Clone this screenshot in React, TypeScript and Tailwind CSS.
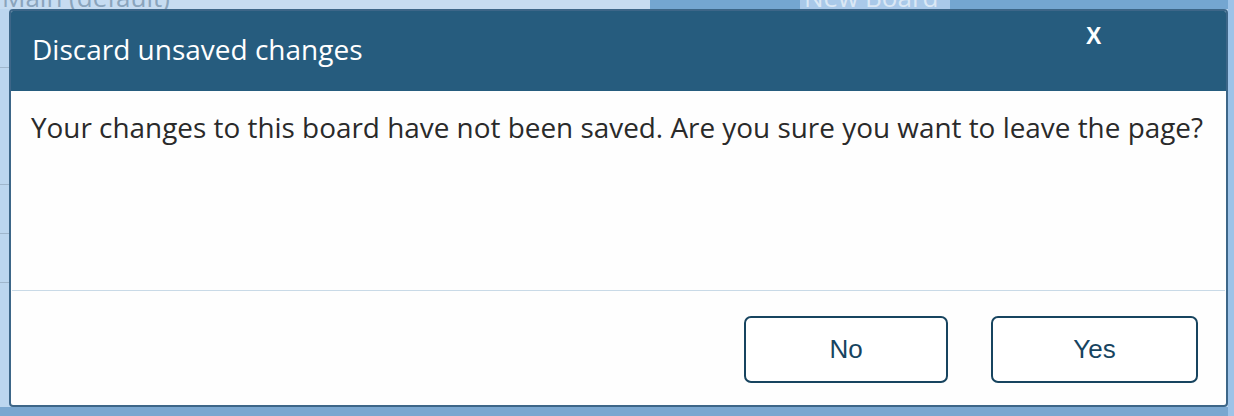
import React from 'react';

const openSans = { fontFamily: '"Open Sans", "Noto Sans", sans-serif' };

export default function App() {
  return (
    <div className="relative w-[1234px] h-[416px] overflow-hidden bg-[#bcd6ef]">
      {/* page behind the dialog */}
      <div className="flex h-[9px] items-end">
        <div className="w-[650px] h-full bg-[#c6dcf1] overflow-hidden">
          <div className="-mt-[16px] pl-[2px] text-[26px] leading-[26px] text-[#8aa4bc]" style={openSans}>
            Main (default)
          </div>
        </div>
        <div className="w-[150px] h-full bg-[#74a6d1]" />
        <div className="w-[150px] h-full bg-[#a9c9e9] overflow-hidden">
          <div className="-mt-[16px] pl-[4px] text-[26px] leading-[26px] text-[#dbe8f5]" style={openSans}>
            New Board
          </div>
        </div>
        <div className="flex-1 h-full bg-[#74a6d1]" />
      </div>
      <div className="flex flex-col w-[9px] h-[300px]">
        <div className="mt-[58px] h-px bg-[#9fb6cc]" />
        <div className="mt-[116px] h-px bg-[#9fb6cc]" />
        <div className="mt-[48px] h-px bg-[#9fb6cc]" />
        <div className="mt-[48px] h-px bg-[#9fb6cc]" />
      </div>
      <div className="absolute left-0 right-0 bottom-0 h-[9px] bg-[#7aa7d0]" />
      <div className="absolute top-0 bottom-0 right-0 w-[6px] bg-[#9dc3e8]" />

      {/* dialog */}
      <div className="absolute left-[9px] top-[9px] w-[1219px] h-[398px] flex flex-col rounded-[4px] border-[2px] border-[#3d6688] bg-[#fefefe] overflow-hidden">
        <div className="flex h-[81px] shrink-0 bg-[#265c7e] -m-px">
          <div className="flex-1 pl-[22px] pt-[20px] text-[28px] leading-[38px] text-white" style={openSans}>
            Discard unsaved changes
          </div>
          <div className="w-[148px] pt-[9px] pl-[7px] text-[23px] font-bold text-white font-['Liberation_Sans',Arial,sans-serif]">
            X
          </div>
        </div>
        <div className="h-[200px] shrink-0 pl-[20px] pt-[18px] text-[27.9px] leading-[38px] text-[#2a2a2a]" style={openSans}>
          Your changes to this board have not been saved. Are you sure you want to leave the page?
        </div>
        <div className="h-px mx-px bg-[#c9dae7]" />
        <div className="flex flex-1 items-start justify-end gap-[43px] pt-[25px] pr-[28px]">
          <button className="w-[204px] h-[67px] rounded-[7px] border-[2px] border-[#17445f] bg-white text-[26px] text-[#17445f] font-['Liberation_Sans',Arial,sans-serif]">
            No
          </button>
          <button className="w-[207px] h-[67px] rounded-[7px] border-[2px] border-[#17445f] bg-white text-[26px] text-[#17445f] font-['Liberation_Sans',Arial,sans-serif]">
            Yes
          </button>
        </div>
      </div>
    </div>
  );
}
